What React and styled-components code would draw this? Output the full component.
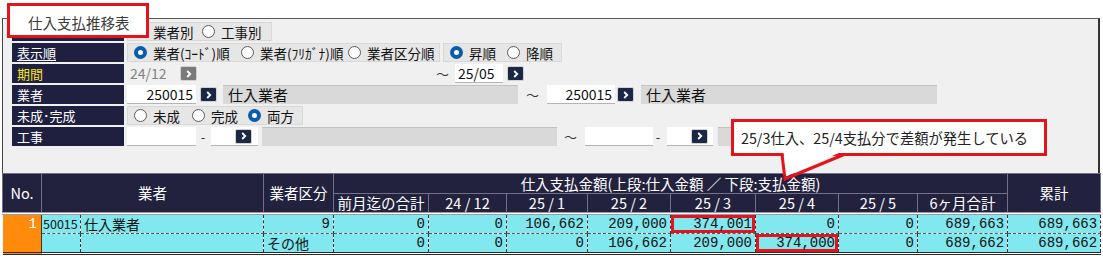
import React from 'react';
import styled, { createGlobalStyle } from 'styled-components';

const GlobalStyle = createGlobalStyle`
  html, body {
    margin: 0;
    padding: 0;
    background: #fff;
  }
  body {
    font-family: "Noto Sans CJK JP", "Liberation Sans", sans-serif;
  }
`;

const Page = styled.div`
  position: relative;
  width: 1103px;
  height: 258px;
  box-sizing: border-box;
  padding: 18px 3px 0 2px;
  overflow: hidden;
`;

const TitleBox = styled.div`
  position: absolute;
  left: 7px;
  top: 3px;
  width: 142px;
  height: 35px;
  box-sizing: border-box;
  border: 3px solid #e3141b;
  background: #fff;
  color: #3c3c3c;
  font-size: 14.5px;
  padding: 6px 0 0 18px;
  z-index: 2;
`;

const Frame = styled.div`
  height: 155px;
  box-sizing: border-box;
  background: #f0f0f0;
  border-top: 1px solid #5a5a5a;
  border-left: 1px solid #444;
  border-right: 2px solid #333;
  padding: 3px 0 0 9px;
`;

const FormGrid = styled.div`
  display: grid;
  grid-template-columns: 112px 1fr;
  grid-auto-rows: 19px;
  row-gap: 2px;
  column-gap: 3px;
`;

const Label = styled.div`
  background: #1f1f40;
  color: ${p => p.$color || '#fff'};
  font-size: 13px;
  line-height: 19px;
  padding-left: 5px;
  text-decoration: ${p => (p.$underline ? 'underline' : 'none')};
  text-underline-offset: 2px;
`;

const Row = styled.div`
  display: flex;
  align-items: center;
  height: 19px;
`;

const RadioGroup = styled.div`
  display: flex;
  align-items: center;
  width: ${p => p.$w}px;
  height: 19px;
  box-sizing: border-box;
  margin-left: ${p => p.$ml || 0}px;
  padding-left: 6px;
  background: #e6e6e6;
  border: 1px solid #d8d8d8;
  flex: none;
`;

const RadioItem = styled.div`
  display: flex;
  align-items: center;
  gap: 6px;
  width: ${p => p.$w}px;
  flex: none;
  font-size: 13.5px;
  color: #111;
  white-space: nowrap;
`;

const RadioDot = styled.span`
  width: 13px;
  height: 13px;
  box-sizing: border-box;
  border-radius: 50%;
  background: #fff;
  border: ${p => (p.$on ? '4px solid #0b5cad' : '1px solid #5a5a5a')};
  flex: none;
`;

const TextBox = styled.div`
  display: flex;
  align-items: center;
  justify-content: ${p => (p.$right ? 'flex-end' : 'flex-start')};
  width: ${p => p.$w}px;
  height: 19px;
  box-sizing: border-box;
  margin-left: ${p => p.$ml || 0}px;
  padding: 0 ${p => p.$pr ?? 3}px 0 3px;
  background: ${p => (p.$disabled ? 'transparent' : '#fff')};
  border-bottom: 1px solid ${p => (p.$disabled ? 'transparent' : '#b4b4b4')};
  color: ${p => (p.$disabled ? '#808080' : '#111')};
  font-size: 14px;
  flex: none;
`;

const NavBtn = styled.span`
  display: flex;
  align-items: center;
  justify-content: center;
  width: 17px;
  height: 15px;
  box-sizing: border-box;
  margin-left: ${p => p.$ml || 0}px;
  border: 1px solid #d2d2d2;
  border-radius: 2px;
  background: ${p => (p.$disabled ? '#7a7a7a' : '#1b2845')};
  flex: none;
`;

const GrayField = styled.div`
  width: ${p => p.$w}px;
  height: 19px;
  box-sizing: border-box;
  margin-left: ${p => p.$ml || 0}px;
  padding-left: 5px;
  background: #d9d9d9;
  border-top: 1px solid #c2c2c2;
  font-size: 15px;
  line-height: 18px;
  color: #111;
  flex: none;
`;

const Tilde = styled.span`
  width: 13px;
  margin-left: ${p => p.$ml || 0}px;
  font-size: 13px;
  color: #333;
  text-align: center;
  flex: none;
`;

const Dash = styled.span`
  width: 8px;
  margin-left: ${p => p.$ml || 0}px;
  font-size: 13px;
  color: #333;
  text-align: center;
  flex: none;
`;

const Callout = styled.div`
  position: absolute;
  left: 731px;
  top: 119px;
  width: 316px;
  height: 37px;
  box-sizing: border-box;
  border: 3px solid #e3141b;
  background: #fff;
  color: #222;
  font-size: 14.3px;
  padding: 5px 0 0 7px;
  z-index: 3;
`;

const CalloutTail = styled.svg`
  position: absolute;
  left: 775px;
  top: 150px;
  z-index: 4;
`;

const Table = styled.table`
  border-collapse: collapse;
  table-layout: fixed;
  width: 1098px;
  font-family: "Liberation Mono", "Noto Sans CJK JP", monospace;
  font-size: 14px;
`;

const Th = styled.th`
  background: #22223f;
  color: #fff;
  font-weight: normal;
  font-family: "Noto Sans CJK JP", "Liberation Sans", sans-serif;
  font-size: 14.5px;
  height: ${p => p.$h || 19}px;
  line-height: 18px;
  padding: 0;
  border: 1px solid #70708a;
  border-bottom: ${p => (p.$last ? '3px double #9a9aac' : '1px solid #70708a')};
  text-align: center;
  white-space: nowrap;
  overflow: hidden;
`;

const Td = styled.td`
  background: #80e8ee;
  color: #111;
  height: 18px;
  padding: 0 3px;
  text-align: ${p => p.$align || 'right'};
  border-left: 1px dashed #333;
  border-right: 1px dashed #333;
  border-bottom: ${p => (p.$bottom ? '3px double #2a2a2a' : '1px dashed #555')};
  white-space: nowrap;
  overflow: hidden;
  line-height: 18px;
  font-family: ${p => (p.$cjk ? '"Noto Sans CJK JP", sans-serif' : 'inherit')};
  font-size: ${p => p.$size || 14}px;
  box-shadow: ${p => (p.$mark ? 'inset 0 0 0 3px #e3141b' : 'none')};
`;

const NoCell = styled.td`
  background: #ff8a0c;
  color: #fff;
  vertical-align: top;
  text-align: right;
  padding: 0 4px;
  line-height: 18px;
  border-right: 1px solid #333;
  border-bottom: 3px double #2a2a2a;
`;

const Chevron = () => (
  <svg width="6" height="8" viewBox="0 0 6 8">
    <polyline points="1.2,1 4.2,4 1.2,7" fill="none" stroke="#fff" strokeWidth="1.8" />
  </svg>
);

const Radio = ({ on, w, children }) => (
  <RadioItem $w={w}>
    <RadioDot $on={on} />
    {children}
  </RadioItem>
);

const colWidths = [39, 39, 183, 70, 95, 78, 81, 83, 85, 83, 79, 90, 93];
const months = ['前月迄の合計', '24 / 12', '25 / 1', '25 / 2', '25 / 3', '25 / 4', '25 / 5', '6ヶ月合計'];
const buyRow = ['0', '0', '106,662', '209,000', '374,001', '0', '0', '689,663', '689,663'];
const payRow = ['0', '0', '0', '106,662', '209,000', '374,000', '0', '689,662', '689,662'];

export default function App() {
  return (
    <Page>
      <GlobalStyle />
      <TitleBox>仕入支払推移表</TitleBox>
      <Frame>
        <FormGrid>
          <Label />
          <Row>
            <RadioGroup $w={145}>
              <Radio on w={68}>業者別</Radio>
              <Radio w={60}>工事別</Radio>
            </RadioGroup>
          </Row>

          <Label $underline>表示順</Label>
          <Row>
            <RadioGroup $w={313}>
              <Radio on w={107}>業者(ｺｰﾄﾞ)順</Radio>
              <Radio w={107}>業者(ﾌﾘｶﾞﾅ)順</Radio>
              <Radio w={90}>業者区分順</Radio>
            </RadioGroup>
            <RadioGroup $w={119} $ml={3}>
              <Radio on w={57}>昇順</Radio>
              <Radio w={50}>降順</Radio>
            </RadioGroup>
          </Row>

          <Label $color="#f3e21a">期間</Label>
          <Row>
            <TextBox $w={50} $disabled>24/12</TextBox>
            <NavBtn $ml={3} $disabled><Chevron /></NavBtn>
            <Tilde $ml={239}>～</Tilde>
            <TextBox $w={48} $ml={6}>25/05</TextBox>
            <NavBtn $ml={4}><Chevron /></NavBtn>
          </Row>

          <Label>業者</Label>
          <Row>
            <TextBox $w={69} $right>250015</TextBox>
            <NavBtn $ml={4}><Chevron /></NavBtn>
            <GrayField $w={295} $ml={6}>仕入業者</GrayField>
            <Tilde $ml={8}>～</Tilde>
            <TextBox $w={68} $ml={8} $right>250015</TextBox>
            <NavBtn $ml={2}><Chevron /></NavBtn>
            <GrayField $w={296} $ml={7}>仕入業者</GrayField>
          </Row>

          <Label>未成･完成</Label>
          <Row>
            <RadioGroup $w={176}>
              <Radio w={58}>未成</Radio>
              <Radio w={56}>完成</Radio>
              <Radio on w={50}>両方</Radio>
            </RadioGroup>
          </Row>

          <Label>工事</Label>
          <Row>
            <TextBox $w={69} />
            <Dash $ml={3}>-</Dash>
            <TextBox $w={47} $ml={4} $right $pr={6}>
              <NavBtn><Chevron /></NavBtn>
            </TextBox>
            <GrayField $w={295} $ml={4} />
            <Tilde $ml={7}>～</Tilde>
            <TextBox $w={68} $ml={8} />
            <Dash $ml={1}>-</Dash>
            <TextBox $w={46} $ml={5} $right $pr={5}>
              <NavBtn><Chevron /></NavBtn>
            </TextBox>
            <GrayField $w={219} $ml={5} />
          </Row>
        </FormGrid>
      </Frame>

      <Callout>25/3仕入、25/4支払分で差額が発生している</Callout>
      <CalloutTail width="75" height="34" viewBox="0 0 75 34">
        <polygon points="8.5,2 66,2 10,27" fill="#fff" />
        <polyline points="7,4.5 10,29 69,4.5" fill="none" stroke="#e3141b" strokeWidth="3" />
      </CalloutTail>

      <Table>
        <colgroup>
          {colWidths.map((w, i) => (
            <col key={i} style={{ width: w }} />
          ))}
        </colgroup>
        <thead>
          <tr>
            <Th rowSpan={2} $last>No.</Th>
            <Th colSpan={2} rowSpan={2} $last>業者</Th>
            <Th rowSpan={2} $last>業者区分</Th>
            <Th colSpan={8} $h={19}>仕入支払金額(上段:仕入金額 ／ 下段:支払金額)</Th>
            <Th rowSpan={2} $last>累計</Th>
          </tr>
          <tr>
            {months.map(m => (
              <Th key={m} $last $h={18}>{m}</Th>
            ))}
          </tr>
        </thead>
        <tbody>
          <tr>
            <NoCell rowSpan={2}>1</NoCell>
            <Td $align="left" $cjk $size={12.5} style={{ paddingLeft: 1 }}>50015</Td>
            <Td $align="left" $cjk>仕入業者</Td>
            <Td>9</Td>
            {buyRow.map((v, i) => (
              <Td key={i} $mark={i === 4}>{v}</Td>
            ))}
          </tr>
          <tr>
            <Td $bottom />
            <Td $bottom />
            <Td $bottom $align="left" $cjk>その他</Td>
            {payRow.map((v, i) => (
              <Td key={i} $bottom $mark={i === 5}>{v}</Td>
            ))}
          </tr>
        </tbody>
      </Table>
    </Page>
  );
}
